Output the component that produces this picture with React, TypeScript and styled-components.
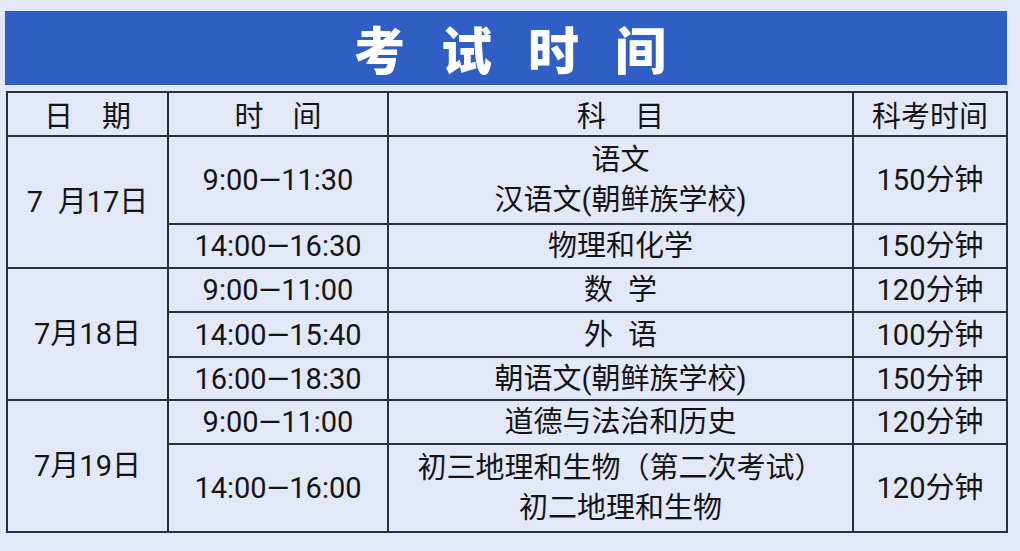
import React from "react";
import styled, { createGlobalStyle } from "styled-components";

const GlobalStyle = createGlobalStyle`
  html, body {
    margin: 0;
    padding: 0;
    background: #e3e8f9;
  }
  body {
    font-family: Roboto, "Noto Sans CJK SC", sans-serif;
    color: #141414;
  }
`;

type Slot = { time: string; subject: string[]; duration: string; height: number };
type Day = { date: string; slots: Slot[] };

const days: Day[] = [
  {
    date: "7\u2002月17日",
    slots: [
      { time: "9:00—11:30", subject: ["语文", "汉语文(朝鲜族学校)"], duration: "150分钟", height: 88 },
      { time: "14:00—16:30", subject: ["物理和化学"], duration: "150分钟", height: 44 },
    ],
  },
  {
    date: "7月18日",
    slots: [
      { time: "9:00—11:00", subject: ["数\u2002学"], duration: "120分钟", height: 44 },
      { time: "14:00—15:40", subject: ["外\u2002语"], duration: "100分钟", height: 45 },
      { time: "16:00—18:30", subject: ["朝语文(朝鲜族学校)"], duration: "150分钟", height: 43 },
    ],
  },
  {
    date: "7月19日",
    slots: [
      { time: "9:00—11:00", subject: ["道德与法治和历史"], duration: "120分钟", height: 44 },
      {
        time: "14:00—16:00",
        subject: ["初三地理和生物（第二次考试）", "初二地理和生物"],
        duration: "120分钟",
        height: 88,
      },
    ],
  },
];

const Page = styled.div`
  width: 1020px;
  height: 551px;
  box-sizing: border-box;
  padding: 11px 13px 0 5px;
  display: flex;
  flex-direction: column;
  gap: 6px;
`;

const Banner = styled.div`
  height: 74px;
  background: #2f5fc4;
  display: flex;
  align-items: center;
  justify-content: center;
  padding-left: 44px;
  color: #ffffff;
  font-family: "Noto Sans CJK SC", sans-serif;
  font-weight: 900;
  font-size: 51px;
  letter-spacing: 36px;
  line-height: 1;
`;

const Table = styled.table`
  width: 1000px;
  margin-left: 1px;
  border-collapse: collapse;
  table-layout: fixed;
  font-size: 29px;
`;

const Cell = styled.td<{ $h?: number }>`
  border: 2px solid #2b2f38;
  padding: 0;
  text-align: center;
  vertical-align: middle;
  height: ${(p) => (p.$h ? `${p.$h - 2}px` : "auto")};
  line-height: 38px;
  white-space: nowrap;
  font-family: Roboto, "Noto Sans CJK SC", sans-serif;
`;

const HeadCell = styled(Cell)`
  font-family: "Noto Sans CJK SC", sans-serif;
`;

const Line = styled.div`
  line-height: 40px;
`;

export default function App() {
  return (
    <>
      <GlobalStyle />
      <Page>
        <Banner>考试时间</Banner>
        <Table>
          <colgroup>
            <col style={{ width: 161 }} />
            <col style={{ width: 220 }} />
            <col style={{ width: 465 }} />
            <col style={{ width: 154 }} />
          </colgroup>
          <thead>
            <tr>
              <HeadCell $h={44}>日　期</HeadCell>
              <HeadCell>时　间</HeadCell>
              <HeadCell>科　目</HeadCell>
              <HeadCell>科考时间</HeadCell>
            </tr>
          </thead>
          <tbody>
            {days.map((day) =>
              day.slots.map((slot, i) => (
                <tr key={day.date + slot.time}>
                  {i === 0 && <Cell rowSpan={day.slots.length}>{day.date}</Cell>}
                  <Cell $h={slot.height}>{slot.time}</Cell>
                  <Cell>
                    {slot.subject.map((s) => (
                      <Line key={s}>{s}</Line>
                    ))}
                  </Cell>
                  <Cell>{slot.duration}</Cell>
                </tr>
              ))
            )}
          </tbody>
        </Table>
      </Page>
    </>
  );
}
